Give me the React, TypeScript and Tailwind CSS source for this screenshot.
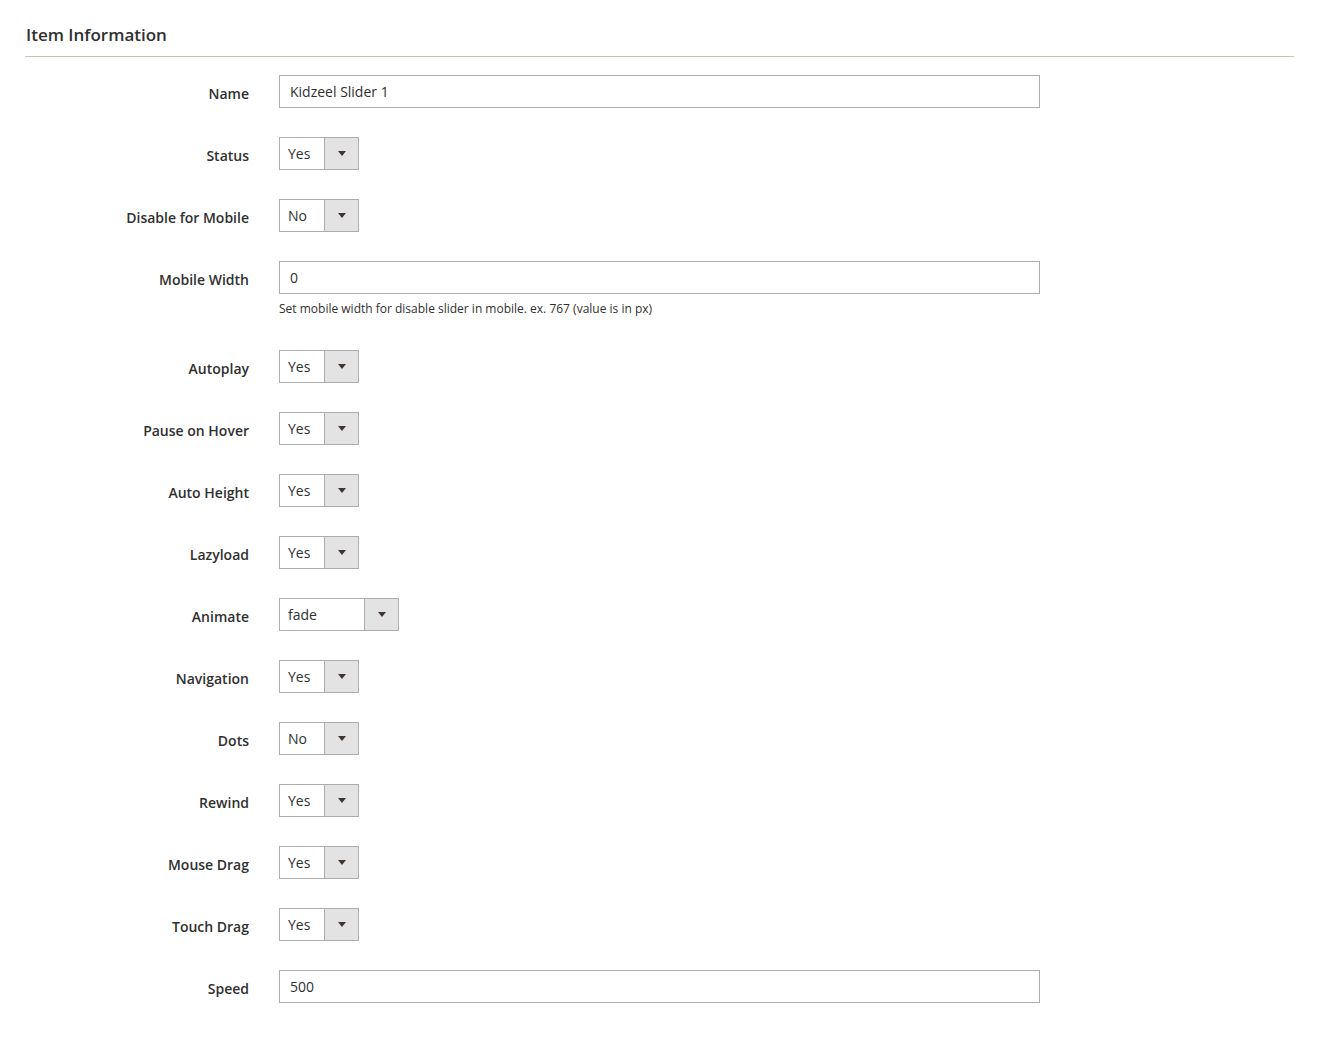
import type { ReactNode } from "react";

type Row =
  | { label: string; kind: "text"; value: string; note?: string }
  | { label: string; kind: "select"; value: string; wide?: boolean };

const ROWS: Row[] = [
  { label: "Name", kind: "text", value: "Kidzeel Slider 1" },
  { label: "Status", kind: "select", value: "Yes" },
  { label: "Disable for Mobile", kind: "select", value: "No" },
  {
    label: "Mobile Width",
    kind: "text",
    value: "0",
    note: "Set mobile width for disable slider in mobile. ex. 767 (value is in px)",
  },
  { label: "Autoplay", kind: "select", value: "Yes" },
  { label: "Pause on Hover", kind: "select", value: "Yes" },
  { label: "Auto Height", kind: "select", value: "Yes" },
  { label: "Lazyload", kind: "select", value: "Yes" },
  { label: "Animate", kind: "select", value: "fade", wide: true },
  { label: "Navigation", kind: "select", value: "Yes" },
  { label: "Dots", kind: "select", value: "No" },
  { label: "Rewind", kind: "select", value: "Yes" },
  { label: "Mouse Drag", kind: "select", value: "Yes" },
  { label: "Touch Drag", kind: "select", value: "Yes" },
  { label: "Speed", kind: "text", value: "500" },
];

function FakeSelect({ value, wide }: { value: string; wide?: boolean }) {
  return (
    <div
      className={
        wide
          ? "flex h-[33px] w-[120px] border border-[#adadad] bg-white"
          : "flex h-[33px] w-[80px] border border-[#adadad] bg-white"
      }
    >
      <span className="flex-1 pl-[8px] text-[14px] leading-[31px] text-[#303030]">{value}</span>
      <span className="flex w-[34px] items-center justify-center border-l border-[#adadad] bg-[#e3e3e3]">
        <svg width="8" height="5" viewBox="0 0 8 5" aria-hidden="true">
          <path d="M0 0h8L4 5z" fill="#41362f" />
        </svg>
      </span>
    </div>
  );
}

function FieldRow({ label, children }: { label: string; children: ReactNode }) {
  return (
    <div className="mb-[29px] flex">
      <label className="w-[224px] shrink-0 pt-[9px] text-right text-[14px] font-semibold leading-[19px] text-[#303030]">
        {label}
      </label>
      <div className="ml-[30px]">{children}</div>
    </div>
  );
}

export default function App() {
  return (
    <div
      className="min-h-screen bg-white pl-[25px] pr-[50px] text-[#303030]"
      style={{ fontFamily: '"Open Sans", "Noto Sans", Arial, sans-serif' }}
    >
      <div className="border-b border-[#cac3b4] pt-[23px] pb-[9px]">
        <h2 className="pl-px text-[17px] font-semibold leading-[24px] text-[#303030]">Item Information</h2>
      </div>
      <div className="mt-[18px]">
        {ROWS.map((row) => (
          <FieldRow key={row.label} label={row.label}>
            {row.kind === "text" ? (
              <>
                <div className="h-[33px] w-[761px] border border-[#adadad] bg-white pl-[10px] text-[14px] leading-[31px] text-[#303030]">
                  {row.value}
                </div>
                {row.note ? (
                  <p className="pt-[7px] pb-[4px] text-[12px] leading-[16px] text-[#303030]">{row.note}</p>
                ) : null}
              </>
            ) : (
              <FakeSelect value={row.value} wide={row.wide} />
            )}
          </FieldRow>
        ))}
      </div>
    </div>
  );
}
